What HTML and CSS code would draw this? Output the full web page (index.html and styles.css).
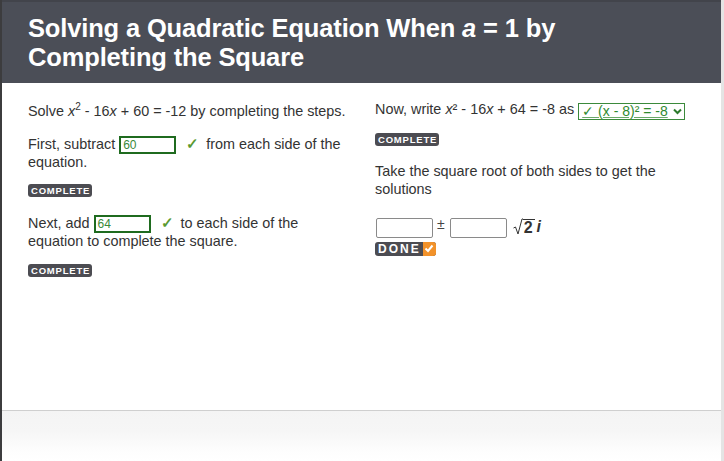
FILE: index.html
```html
<!DOCTYPE html>
<html>
<head>
<meta charset="utf-8">
<link rel="stylesheet" href="styles.css">
</head>
<body>
<div class="frame">
  <header class="head">
    <h1>Solving a Quadratic Equation When <i>a</i> = 1 by Completing the Square</h1>
  </header>
  <main class="content">
    <section class="col col-left">
      <p class="line l-intro">Solve <i>x</i><sup>2</sup> - 16<i>x</i> + 60 = -12 by completing the steps.</p>
      <p class="line l-first">First, subtract <span class="answer">60</span> <span class="check">✓</span> from each side of the equation.</p>
      <span class="badge b-first">COMPLETE</span>
      <p class="line l-next">Next, add <span class="answer">64</span> <span class="check">✓</span> to each side of the equation to complete the square.</p>
      <span class="badge">COMPLETE</span>
    </section>
    <section class="col col-right">
      <p class="line l-now">Now, write <i>x</i>² - 16<i>x</i> + 64 = -8 as <span class="select"><span class="sel-text">✓ (x - 8)² = -8</span><svg class="chev" width="9" height="7" viewBox="0 0 9 7"><path d="M1 1.5 L4.5 5 L8 1.5" fill="none" stroke="#2c7a2c" stroke-width="2"/></svg></span></p>
      <span class="badge b-now">COMPLETE</span>
      <p class="line l-take">Take the square root of both sides to get the solutions</p>
      <div class="solve">
        <span class="blank"></span>
        <span class="pm">±</span>
        <span class="blank"></span>
        <span class="root"><span class="radical"><svg width="10" height="17" viewBox="0 0 10 17"><path d="M0.5 10 L2.5 9 L5 16 L9 1 L10 1" fill="none" stroke="#333" stroke-width="1"/></svg><span class="rad-num">2</span></span><i class="imag">i</i></span>
      </div>
      <span class="done">DONE<span class="done-check"><svg width="10" height="9" viewBox="0 0 10 9"><path d="M1.5 4.5 L4 7 L8.5 1.5" fill="none" stroke="#fff" stroke-width="2"/></svg></span></span>
    </section>
  </main>
  <footer class="foot"></footer>
</div>
</body>
</html>
```
FILE: styles.css
```css
* { box-sizing: border-box; }
html, body { margin: 0; padding: 0; }
body {
  width: 724px;
  height: 461px;
  overflow: hidden;
  background: #fff;
  font-family: "Liberation Sans", Arial, sans-serif;
}
.frame {
  height: 461px;
  display: flex;
  flex-direction: column;
  border-left: 2px solid #3c3c3e;
  border-right: 3px solid #e4e4e4;
}
.head {
  height: 83px;
  background: #4b4e57;
  border-top: 2px solid #42444b;
  padding: 12px 0 0 26px;
}
.head h1 {
  margin: 0;
  color: #fff;
  font-size: 25.5px;
  line-height: 29px;
  font-weight: bold;
  width: 600px;
  letter-spacing: -0.15px;
}
.content {
  flex: 1;
  display: flex;
  padding: 19px 0 0 26px;
}
.col { display: flex; flex-direction: column; align-items: flex-start; }
.col-left { width: 347px; padding-right: 22px; }
.col-right { width: 330px; }
.line {
  margin: 0;
  font-size: 14.4px;
  line-height: 18px;
  color: #333;
}
.line sup { font-size: 10px; line-height: 0; vertical-align: 6px; }
.l-intro { margin-bottom: 15px; }
.l-first { margin-bottom: 13px; }
.b-first { margin-bottom: 17px; }
.l-next { margin-bottom: 14px; }
.answer {
  display: inline-block;
  width: 57px;
  height: 18px;
  margin: -4px 0;
  border: 2px solid #1f6b1f;
  color: #3a8a3a;
  font-size: 12px;
  line-height: 14px;
  padding-left: 2px;
  vertical-align: baseline;
}
.check {
  color: #5a9a32;
  font-weight: bold;
  font-size: 15px;
  line-height: 14px;
  margin: 0 3px 0 6px;
}
.badge {
  display: inline-block;
  background: #4c4c52;
  color: #fff;
  font-size: 9.5px;
  font-weight: bold;
  letter-spacing: 0.8px;
  line-height: 13px;
  height: 13px;
  padding: 0 2px 0 3px;
  border-radius: 3px;
}
.select {
  display: inline-flex;
  align-items: center;
  gap: 5px;
  height: 17px;
  border: 1px solid #3b8a3b;
  padding: 0 2px 0 3px;
  vertical-align: -2px;
  color: #2f8a2f;
  font-size: 14px;
  line-height: 14px;
}
.sel-text { text-decoration: underline; text-decoration-color: #6aa86a; }
.l-now { margin-top: -2px; margin-bottom: 13px; }
.b-now { margin-bottom: 16px; }
.l-take { margin-bottom: 20px; }
.solve {
  display: flex;
  align-items: flex-start;
  height: 24px;
}
.blank {
  display: inline-block;
  width: 57px;
  height: 20px;
  border: 1px solid #8a8a8a;
  border-radius: 2px;
  margin-left: 1px;
  background: #fff;
}
.pm { font-size: 14px; color: #444; margin: -3px 4px 0; line-height: 18px; }
.root {
  display: inline-flex;
  align-items: flex-start;
  margin-left: 6px;
  margin-top: -1px;
  font-size: 16px;
  color: #333;
}
.radical { display: inline-flex; align-items: flex-start; }
.radical svg { margin-top: 1px; }
.rad-num { border-top: 1px solid #333; padding: 0 2px 0 1px; line-height: 16px; font-weight: bold; margin-top: 2px; }
.imag { font-weight: bold; margin-left: 2px; line-height: 18px; margin-top: 1px; }
.done {
  display: inline-flex;
  align-items: center;
  background: #4c4c52;
  color: #fff;
  font-size: 12px;
  font-weight: bold;
  letter-spacing: 2px;
  height: 14px;
  padding-left: 3px;
  border-radius: 3px;
  overflow: hidden;
}
.done-check {
  display: inline-flex;
  align-items: center;
  justify-content: center;
  width: 13px;
  height: 14px;
  background: #f2922a;
  margin-left: 2px;
}
.foot {
  height: 51px;
  border-top: 1px solid #cfcfcf;
  background: linear-gradient(#f4f4f4 0%, #f6f6f6 40%, #fdfdfd 80%, #fff 100%);
}
```
